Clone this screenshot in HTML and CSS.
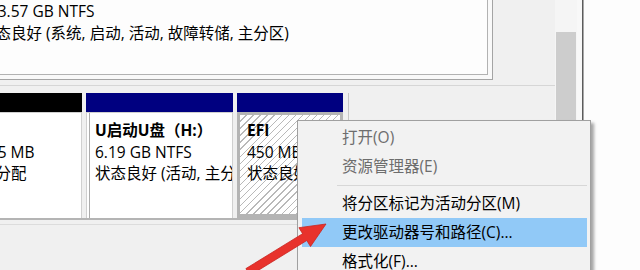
FILE: index.html
```html
<!DOCTYPE html>
<html>
<head>
  <meta charset="utf-8">
  <link rel="stylesheet" href="styles.css">
</head>
<body>
  <div class="screen">
    <div class="window">
      <div class="pane">
        <!-- Disk 0, system volume (only its lower part is visible) -->
        <div class="disk-row disk0">
          <div class="volume">
            <div>223.57 GB NTFS</div>
            <div>状态良好 (系统, 启动, 活动, 故障转储, 主分区)</div>
          </div>
        </div>

        <!-- Disk 1, removable -->
        <div class="disk-row disk1">
          <div class="part part-free">
            <div class="bar black"></div>
            <div class="cell">
              <div class="name">&nbsp;</div>
              <div>125 MB</div>
              <div>未分配</div>
            </div>
          </div>
          <div class="part part-usb">
            <div class="bar"></div>
            <div class="cell">
              <div class="name">U启动U盘（H:）</div>
              <div>6.19 GB NTFS</div>
              <div>状态良好 (活动, 主分区)</div>
            </div>
          </div>
          <div class="part part-efi">
            <div class="bar"></div>
            <div class="cell efi">
              <div class="name">EFI</div>
              <div>450 MB</div>
              <div>状态良好 (EFI 系统分区)</div>
            </div>
          </div>
          <div class="rest"></div>
        </div>

        <div class="below"></div>
      </div>
      <div class="scrollbar"><div class="thumb"></div></div>
      <div class="scroll-gap"></div>
      <div class="frame"></div>
    </div>
    <div class="desktop"></div>

    <!-- Context menu -->
    <div class="menu">
      <div class="item disabled">打开(O)</div>
      <div class="item disabled">资源管理器(E)</div>
      <div class="sep"></div>
      <div class="item">将分区标记为活动分区(M)</div>
      <div class="item active">更改驱动器号和路径(C)...</div>
      <div class="item">格式化(F)...</div>
    </div>

    <!-- Red pointer arrow -->
    <svg class="arrow" width="640" height="270" viewBox="0 0 640 270">
      <polygon points="326,224 298.9,227.7 302.6,233.7 245.9,268.6 250.1,275.4 306.8,240.5 310.5,246.5"
               fill="#e8322c" stroke="#c92420" stroke-width="0.8" stroke-linejoin="round"/>
    </svg>
  </div>
</body>
</html>
```

FILE: styles.css
```css
* {
  margin: 0;
  padding: 0;
  box-sizing: border-box;
}

body {
  width: 640px;
  height: 270px;
  overflow: hidden;
  background: #fdfdfd;
  font-family: "Open Sans", "Noto Sans CJK SC", sans-serif;
  font-size: 15.5px;
  color: #000;
}

.screen {
  position: relative;
  display: flex;
  width: 640px;
  height: 270px;
  overflow: hidden;
}

.window {
  display: flex;
  flex: 0 0 584px;
  background: #f0f0f0;
}

.pane {
  flex: 0 0 555px;
  display: flex;
  flex-direction: column;
  overflow: hidden;
}

/* Disk 0 */
.disk0 {
  height: 85px;
  flex-shrink: 0;
}

.volume {
  width: 523px;
  height: 81px;
  margin: -1px 0 0 -30px;
  padding-left: 9px;
  line-height: 22px;
  white-space: nowrap;
  background: #fdfdfd;
  border: 1px solid #a4a4a4;
  box-shadow: inset -4px -4px 0 #f9f9f9, inset -5px -5px 0 #b2b2b2;
}

/* Disk 1 */
.disk1 {
  display: flex;
  flex-shrink: 0;
  padding-top: 7px;
  border-top: 1px solid #d6d6d6;
  border-bottom: 2px solid #b4b4b4;
}

.part {
  display: flex;
  flex-direction: column;
  margin-right: 4px;
}

.part-free {
  width: 111px;
  margin-left: -29px;
}

.part-usb {
  width: 147px;
}

.part-efi {
  width: 106px;
  margin-right: 0;
}

.bar {
  height: 19px;
  background: #000080;
}

.bar.black {
  background: #000;
}

.cell {
  height: 106px;
  padding: 7px 0 0 8px;
  line-height: 21.5px;
  white-space: nowrap;
  overflow: hidden;
  background: #fff;
  border: 1px solid #d0d0d0;
  border-bottom: none;
  box-shadow: inset 2px 0 0 #fff, inset 3px 0 0 #acacac;
}

.cell .name {
  font-weight: bold;
}

.cell.efi {
  padding: 5px 0 0 7px;
  border: 3px solid #b4b4b4;
  border-bottom-width: 4px;
  box-shadow: none;
  background: repeating-linear-gradient(135deg, #fff 0 4px, #b9b9b9 4px 5px);
}

.rest {
  flex: 1;
  margin-left: 5px;
  border-left: 1px solid #c6c6c6;
}

.below {
  flex: 1;
  margin-top: 4px;
  border-top: 1px solid #dcdcdc;
}

/* Scroll bar and window edge */
.scrollbar {
  flex: 0 0 22px;
  padding: 32px 1px 0;
  background: #f5f5f5;
}

.thumb {
  height: 200px;
  background: #cdcdcd;
}

.scroll-gap {
  flex: 0 0 5px;
  background: #f8f8f8;
}

.frame {
  flex: 0 0 2px;
  background: #5c5c5c;
  border-right: 1px solid #a8a8a8;
}

.desktop {
  flex: 1;
  background: #fdfdfd;
}

/* Context menu */
.menu {
  position: absolute;
  left: 297px;
  top: 120px;
  width: 294px;
  height: 170px;
  padding: 2px 0;
  background: #f2f2f2;
  border: 1px solid #a0a0a0;
  box-shadow: 3px 3px 3px rgba(0, 0, 0, 0.35);
}

.item {
  height: 29px;
  line-height: 29px;
  margin: 0 3px 0 4px;
  padding-left: 40px;
  white-space: nowrap;
}

.item.disabled {
  color: #6d6d6d;
}

.item.active {
  background: #91c9f7;
}

.sep {
  margin: 4px 3px 3px 39px;
  border-top: 1px solid #d7d7d7;
}

.arrow {
  position: absolute;
  left: 0;
  top: 0;
  pointer-events: none;
}
```
